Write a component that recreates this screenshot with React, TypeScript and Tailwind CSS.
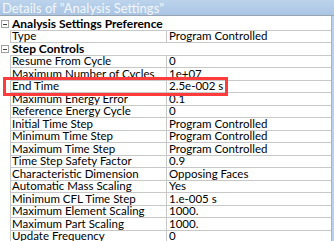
import React from 'react';

type Row = { name: string; value?: string; group?: boolean };

const rows: Row[] = [
  { name: 'Analysis Settings Preference', group: true },
  { name: 'Type', value: 'Program Controlled' },
  { name: 'Step Controls', group: true },
  { name: 'Resume From Cycle', value: '0' },
  { name: 'Maximum Number of Cycles', value: '1e+07' },
  { name: 'End Time', value: '2.5e-002 s' },
  { name: 'Maximum Energy Error', value: '0.1' },
  { name: 'Reference Energy Cycle', value: '0' },
  { name: 'Initial Time Step', value: 'Program Controlled' },
  { name: 'Minimum Time Step', value: 'Program Controlled' },
  { name: 'Maximum Time Step', value: 'Program Controlled' },
  { name: 'Time Step Safety Factor', value: '0.9' },
  { name: 'Characteristic Dimension', value: 'Opposing Faces' },
  { name: 'Automatic Mass Scaling', value: 'Yes' },
  { name: 'Minimum CFL Time Step', value: '1.e-005 s' },
  { name: 'Maximum Element Scaling', value: '1000.' },
  { name: 'Maximum Part Scaling', value: '1000.' },
  { name: 'Update Frequency', value: '0' },
];

function MinusBox() {
  return (
    <div className="w-[8px] h-[8px] border border-[#a0a0a0] bg-white flex items-center justify-center">
      <div className="w-[4px] h-px bg-[#404040]" />
    </div>
  );
}

export default function App() {
  return (
    <div
      className="relative w-[334px] h-[241px] overflow-hidden bg-white text-black text-[11.5px] leading-[12px]"
      style={{ fontFamily: 'Lato, "Noto Sans", sans-serif' }}
    >
      {/* Title bar */}
      <div className="h-[16px] bg-gradient-to-b from-[#bcd3ec] to-[#a9c5e4] border-b border-[#9aa4b0] flex items-center pl-[2px] text-[#f4f7fb] text-[13px]">
        Details of "Analysis Settings"
      </div>

      <div className="flex">
        <div className="flex-1 pt-[2px]">
          {rows.map((r) => (
            <div key={r.name} className="flex h-[12.5px]">
              <div className="w-[10px] flex items-center justify-start pl-[1px]">
                {r.group && <MinusBox />}
              </div>
              {r.group ? (
                <div className="flex-1 border-b border-[#c8c8c8] flex items-center pl-[2px] font-bold text-[12px]">
                  {r.name}
                </div>
              ) : (
                <div className="flex-1 flex border-b border-l border-[#c8c8c8]">
                  <div className="w-[156px] border-r border-[#c8c8c8] flex items-center pl-[1px] whitespace-nowrap overflow-hidden">
                    {r.name}
                  </div>
                  <div className="flex-1 flex items-center pl-[2px] whitespace-nowrap">{r.value}</div>
                </div>
              )}
            </div>
          ))}
        </div>
        {/* Scrollbar edge */}
        <div className="w-[3px] h-[225px] border-l border-[#b0b0b0] bg-[#b9d1ea]" />
      </div>

      {/* Red highlight */}
      <div className="absolute left-[3px] top-[77px] w-[225px] h-[19px] border-[3px] border-[#ff3b3b]" />
    </div>
  );
}
